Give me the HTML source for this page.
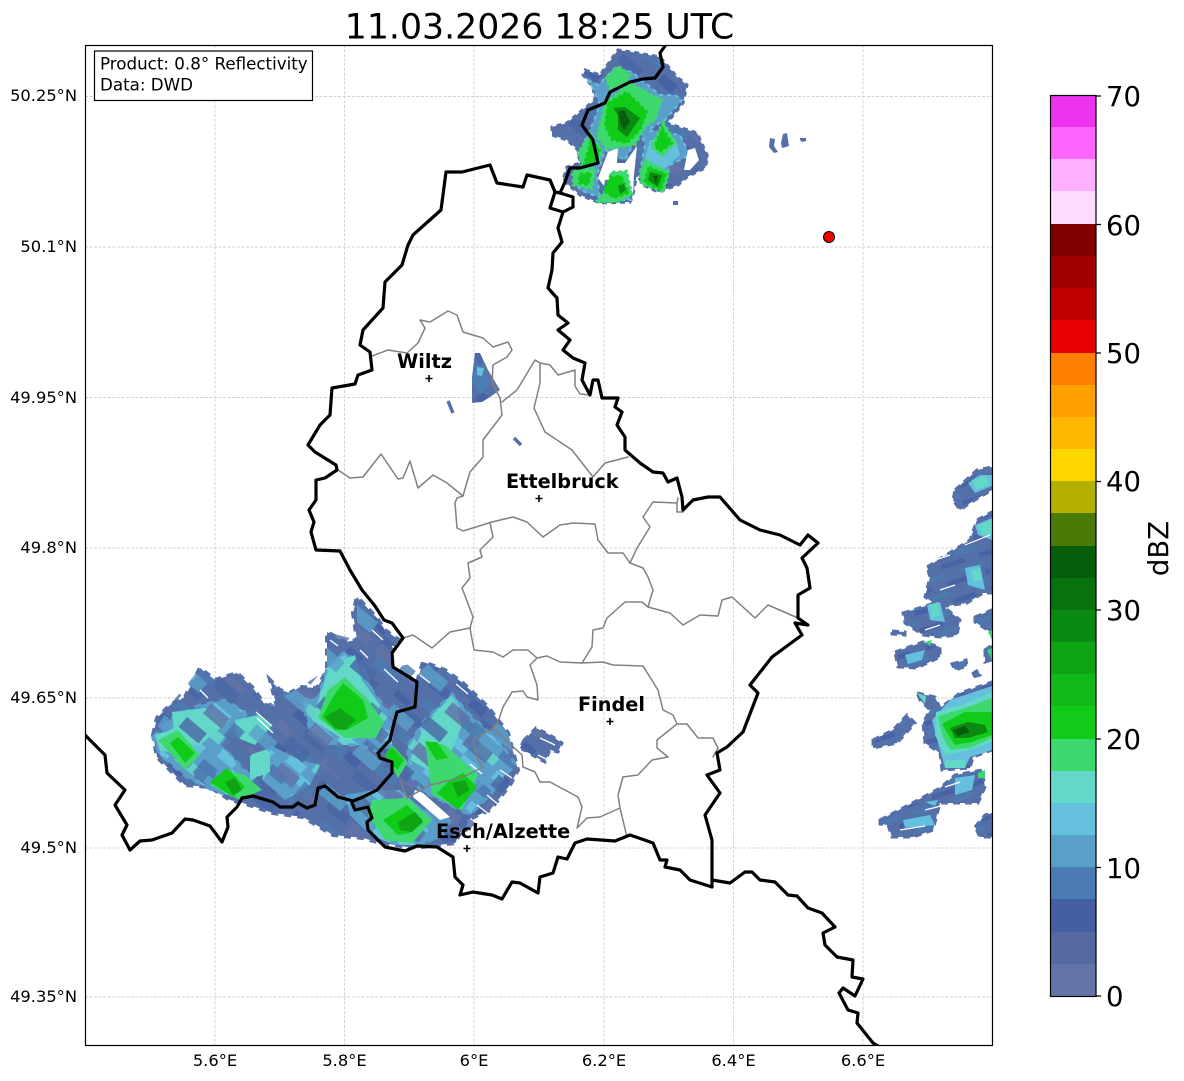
<!DOCTYPE html>
<html><head><meta charset="utf-8"><style>html,body{margin:0;padding:0;background:#fff}svg{display:block}text{font-family:"DejaVu Sans","Liberation Sans",sans-serif;fill:#000}</style></head><body>
<svg width="1184" height="1081" viewBox="0 0 1184 1081" xmlns="http://www.w3.org/2000/svg">
<defs>
<clipPath id="ax"><rect x="85.5" y="45.5" width="907" height="1000"/></clipPath>
<pattern id="pb" patternUnits="userSpaceOnUse" width="64" height="40" patternTransform="rotate(40)">
<rect width="64" height="40" fill="#5570a8"/><rect x="0" y="0" width="26" height="10" fill="#4a68a6"/><rect x="32" y="10" width="24" height="10" fill="#6072a8"/><rect x="8" y="20" width="30" height="10" fill="#4c79b0"/><rect x="44" y="30" width="18" height="10" fill="#4662a4"/></pattern>
<pattern id="pt" patternUnits="userSpaceOnUse" width="56" height="40" patternTransform="rotate(40)">
<rect width="56" height="40" fill="#5a9fc9"/><rect x="0" y="0" width="22" height="10" fill="#64c0dc"/><rect x="28" y="10" width="20" height="10" fill="#4d7db4"/><rect x="6" y="20" width="24" height="10" fill="#63d0cc"/><rect x="36" y="30" width="20" height="10" fill="#64c0dc"/></pattern>
<pattern id="po" patternUnits="userSpaceOnUse" width="92" height="52" patternTransform="rotate(40)">
<rect x="4" y="0" width="30" height="13" fill="#5570a8"/><rect x="52" y="13" width="26" height="13" fill="#4a68a6"/><rect x="18" y="26" width="28" height="13" fill="#5a9fc9"/><rect x="62" y="39" width="24" height="13" fill="#6072a8"/><rect x="0" y="39" width="14" height="13" fill="#4c79b0"/></pattern>
<pattern id="pe" patternUnits="userSpaceOnUse" width="40" height="18" patternTransform="rotate(-18)">
<rect width="40" height="18" fill="#5570a8"/><rect x="0" y="0" width="24" height="5" fill="#4862a6"/><rect x="16" y="9" width="24" height="5" fill="#4c79b0"/></pattern>
</defs>
<rect width="1184" height="1081" fill="#fff"/>
<text x="539.5" y="38.5" font-size="34.7" text-anchor="middle">11.03.2026 18:25 UTC</text>

<!-- grid -->
<g stroke="#c2c2c2" stroke-width=".7" stroke-dasharray="3 1.6" fill="none">
<path d="M215 45V1045M344.5 45V1045M474 45V1045M604 45V1045M733.5 45V1045M863 45V1045"/>
<path d="M85 96.5H992M85 247H992M85 397.5H992M85 548H992M85 698H992M85 848H992M85 997H992"/>
</g>

<g clip-path="url(#ax)">
<!-- SW cluster -->
<path fill="url(#pb)" stroke="#5570a8" stroke-width="4" stroke-dasharray="7 6" d="M153 735L157 718L170 705L185 697L200 668L215 680L237 673L253 688L265 705L277 707L270 680L280 690L290 693L300 687L317 688L327 670L327 632L345 642L357 640L353 613L357 597L377 618L385 630L399 640L390 653L391 667L417 682L423 662L445 670L463 683L488 707L508 733L518 770L510 785L490 810L467 820L455 843L423 847L407 847L377 842L363 838L333 835L303 817L273 813L243 803L230 800L210 787L185 785L157 757Z"/>
<path fill="url(#pb)" stroke="#5570a8" stroke-width="3" stroke-dasharray="6 5" d="M524 740L536 728L550 735L562 743L558 752L550 750L545 762L532 755L520 748Z"/>
<path fill="url(#pt)" stroke="#5a9fc9" stroke-width="3" stroke-dasharray="7 6" d="M153 737L172 718L200 705L225 700L245 712L248 725L225 745L235 760L250 775L262 785L245 797L228 795L212 790L188 778L160 755Z"/>
<path fill="url(#pt)" stroke="#5a9fc9" stroke-width="3" stroke-dasharray="7 6" d="M302 700L318 698L328 665L345 652L365 668L372 690L390 715L392 745L378 752L360 745L330 745L310 730Z"/>
<path fill="url(#pt)" stroke="#5a9fc9" stroke-width="3" stroke-dasharray="7 6" d="M408 745L425 720L452 694L470 715L490 733L500 742L516 765L505 775L490 795L470 815L450 805L420 790L408 770Z"/>
<path fill="url(#pt)" d="M345 795L375 790L400 790L430 815L445 835L425 845L395 845L370 835L350 815Z"/>
<path fill="url(#pt)" d="M270 745L300 760L320 765L310 785L285 800L262 780Z"/>
<path fill="#63d8c8" d="M172 712L205 708L230 720L200 745L175 745ZM235 720L258 715L272 725L255 745L238 738ZM155 735L175 728L180 755L160 750ZM250 755L270 748L270 772L250 780Z"/>
<path fill="#63d8c8" d="M330 665L355 655L362 680L380 705L375 735L345 740L312 720ZM425 725L452 695L462 725L450 755L428 770L410 760Z"/>
<path fill="url(#po)" opacity=".8" d="M153 735L170 705L200 668L237 673L265 705L290 693L327 670L327 632L357 640L357 597L385 630L393 667L423 662L463 683L508 733L518 770L490 810L455 843L407 847L363 838L303 817L243 803L210 787L157 757Z"/>
<path fill="#3dd86e" d="M328 690L345 677L368 700L384 722L376 738L345 738L318 718ZM210 785L225 770L245 775L262 790L240 800ZM158 740L178 730L200 755L185 770ZM425 740L445 745L478 775L462 810L432 795ZM385 755L392 745L408 762L398 778ZM372 800L408 798L432 820L412 843L385 840L368 815Z"/>
<path fill="#10cc18" d="M322 717L333 697L343 683L363 700L368 718L347 730L335 730ZM170 743L178 737L195 753L185 763ZM210 782L227 768L245 787L233 797ZM383 820L407 805L423 820L410 833L398 835ZM450 780L463 773L477 787L458 810L437 793ZM385 755L392 747L404 760L397 770ZM425 742L437 742L448 758L436 760Z"/>
<path fill="#0ea414" d="M325 717L340 708L356 720L345 730L335 728ZM225 782L235 778L242 790L233 795ZM398 822L415 812L423 822L412 832L400 830ZM452 783L465 780L470 790L458 797Z"/>
<path fill="#fff" d="M415 790L423 793L450 817L440 820L413 797Z"/>
<path stroke="#fff" stroke-width="1.3" d="M256 712L272 726M257 718L273 733M384 669L398 682M392 646L398 651M360 650L368 658M456 684L468 694M470 764L482 774M515 750L530 754M487 795L500 806M477 805L490 815M160 780L172 792M200 690L208 698M372 630L383 640M330 640L338 646M500 770L512 778M540 738L555 745M538 755L552 762M420 675L430 683"/>

<!-- north cluster -->
<path fill="url(#pb)" stroke="#5570a8" stroke-width="3" stroke-dasharray="5 4" d="M585 70L600 75L618 50L638 53L660 57L677 77L687 85L683 103L667 123L697 133L708 157L705 168L687 177L678 185L658 192L643 185L637 173L633 195L630 202L600 203L580 195L563 180L567 167L580 163L578 150L567 140L552 135L552 127L567 123L580 112L595 100L593 87L583 75Z"/>
<path fill="#5a9fc9" stroke="#64c0dc" stroke-width="2" stroke-dasharray="4 4" d="M588 80L598 85L615 68L632 72L660 95L675 95L682 100L665 120L648 130L680 135L690 155L670 165L665 180L650 182L640 172L645 145L640 130L625 160L605 150L597 175L600 197L625 197L630 200L605 200L580 190L572 175L585 165L585 140L592 125L600 105L595 92Z"/>
<path fill="#fff" d="M598 178L608 152L618 148L617 163L625 163L637 146L634 175L633 195L627 178L605 180L604 186ZM688 150L695 148L699 160L690 170L684 170Z"/>
<path fill="#64c0dc" d="M650 140L676 140L680 155L665 168L660 178L648 178L643 165Z"/>
<g stroke-dasharray="3 3" stroke-width="2.5">
<path fill="#3dd86e" stroke="#3dd86e" d="M606 78L618 66L630 75L624 88L610 90ZM605 103L630 83L662 100L655 120L645 127L635 145L607 149L597 137L600 123ZM663 122L676 143L662 156L651 147ZM645 160L669 172L664 192L641 184L640 172ZM590 133L602 150L599 162L583 170L578 153ZM573 170L595 168L592 189L573 185ZM596 202L608 187L611 172L627 171L632 195L618 202Z"/>
<path fill="#10cc18" stroke="#10cc18" d="M608 103L627 92L647 112L640 130L627 143L612 140L605 125ZM662 128L672 143L660 152L655 146ZM649 167L666 174L661 190L644 182ZM591 140L600 150L596 161L584 165ZM580 174L591 173L588 185L579 183ZM610 177L621 176L629 193L614 198L604 191Z"/>
</g>
<path fill="#0a8a12" d="M613 108L625 107L640 118L627 137L618 130L618 115ZM650 172L662 175L658 187L648 180ZM618 186L624 184L626 190L620 194Z"/>
<path fill="#065e0a" d="M618 112L624 110L630 122L624 130L620 122ZM653 176L658 176L656 184Z"/>
<path fill="#5570a8" d="M673 201h5v4h-5zM770 138l5 1-1 7 4 6-4 1-5-6zM783 134l4-1 2 13-7 2-1-5zM800 138h6v3l-4 1-2-2z"/>

<!-- Wiltz cell -->
<path fill="url(#pb)" d="M475 353L480 353L488 370L500 390L490 397L482 402L472 403L472 377Z"/>
<path fill="#4c7cb4" d="M476 365L484 365L490 385L480 395L475 385Z"/>
<path fill="#64c0dc" d="M477 367L484 368L482 376L477 375Z"/>
<path stroke="#5570a8" stroke-width="3.5" fill="none" d="M448 401L453 413M514 438L521 445"/>

<!-- east cluster -->
<g fill="url(#pe)" stroke="#5570a8" stroke-width="3" stroke-dasharray="7 5">
<path d="M955 490L977 470L992 467V490L970 503L960 510L953 500Z"/>
<path d="M927 567L970 540L977 520L992 512V593L983 593L967 603L940 607L925 597L930 577Z"/>
<path d="M903 613L938 602L960 620L957 635L940 637L923 635L905 623ZM892 631L905 632L905 635L892 634Z"/>
<path d="M895 652L923 642L940 647L940 657L917 668L898 667Z"/>
<path d="M952 664L966 660L967 666L955 670ZM972 674L978 670L980 675L973 677ZM975 617L992 610V633L975 622Z"/>
<path d="M917 693L935 697L940 708L960 693L992 682V750L973 757L970 768L942 770L940 753L925 743L923 723L930 710L920 700Z"/>
<path d="M873 740L893 730L907 715L915 723L897 743L873 748Z"/>
<path d="M880 820L903 808L940 788L955 775L982 770L985 787L978 803L960 803L940 803L933 830L913 837L892 837L888 825L880 824Z"/>
<path d="M975 827L985 815L992 813V837L980 837Z"/>
<path d="M985 650l7-5v15l-7 2z"/>
</g>
<g fill="#64c0dc">
<path d="M968 483L980 475L992 475V486L975 493ZM975 525L992 518V540L978 535ZM965 568L980 565L985 590L968 585ZM927 605L940 602L945 622L930 620ZM905 655L925 650L922 660L908 664ZM950 700L992 686V750L970 757L965 768L945 768L940 750L932 720Z"/>
<path d="M903 820L930 815L935 825L905 828ZM955 778L975 775L972 790L955 795ZM925 802L938 800L935 806Z"/>
</g>
<path fill="#63d8c8" d="M972 480L985 476L990 484L976 490ZM978 525L992 520V535L982 535ZM972 570L980 568L982 580L973 582ZM930 605L938 602L940 615L932 618ZM917 693L926 696L925 704ZM936 712L965 704L992 692V742L970 750L945 755L935 735ZM945 760L965 760L965 768L945 768Z"/>
<path fill="#3dd86e" d="M938 716L965 708L992 698V738L970 748L950 750L942 735ZM978 773L985 770V778L978 778ZM925 642L932 640L930 646ZM988 632L992 630V640ZM987 650L992 648V660Z"/>
<path fill="#10cc18" d="M942 724L965 712L992 712V735L972 742L955 745Z"/>
<path fill="#0a8a12" d="M950 728L968 722L985 725L988 732L968 738L955 738Z"/>
<path fill="#065e0a" d="M953 730L965 726L970 732L958 736Z"/>
<path stroke="#fff" stroke-width="1.2" d="M935 560L950 555M940 590L955 585M925 630L940 625M972 770L985 765M900 830L925 826M925 810L945 805M945 787L960 782M965 545L990 535"/>

<!-- grey boundaries -->
<g fill="none" stroke="#808080" stroke-width="1.5" stroke-linejoin="round" stroke-linecap="round">
<path d="M338 470L350 478L363 477L381 454L398 479L403 478L410 461L418 488L433 475L447 483L463 496L457 498L455 503L457 528L463 531L492 522L513 517L527 522L543 537L560 525L573 523L595 524L598 540L608 553L623 553L630 563L637 548L650 527L643 517L653 502L677 503L678 498M677 503V512L683 512"/>
<path d="M372 356L388 350L407 353L418 343L425 328L420 320L430 322L448 311L457 315L463 332L483 338L493 347L508 342L512 350L507 357L493 365L492 383L500 398L502 415L483 440L483 457L470 472L467 482L463 496"/>
<path d="M502 402L517 390L535 360L540 363L540 383L534 408L545 432L572 450L593 477L605 463L628 457M540 363L550 365L558 375L575 370L575 386L580 394L590 395"/>
<path d="M490 523L493 537L480 550L482 557L468 563L470 578L462 588L473 617L470 628L474 650L493 652L503 657L513 650L528 650L537 658L547 656L560 662L582 663L592 647L593 630L603 628L607 618L625 602L642 602L648 607L653 590L648 577L643 568L630 563"/>
<path d="M470 628L450 632L432 648L413 635L403 638"/>
<path d="M648 607L670 613L683 625L700 615L718 616L722 600L732 597L755 618L768 605L798 618"/>
<path d="M537 658L530 665L537 685L538 700L527 697L523 691L512 692L503 707L498 722L493 728L473 740L478 760L483 767L463 777L430 785L407 798L400 780M493 728L522 755L523 767L535 772L540 782L550 782L578 797L582 807L577 828L587 818L600 817L620 808L627 837M620 808L618 795L623 777L638 775L652 760L668 757L657 748L657 740L677 724M582 663L603 662L613 665L643 666L658 690L663 710L673 715L677 724L687 724L698 738L713 738L718 748L713 757"/>
</g>
<!-- black border -->
<g fill="none" stroke="#000" stroke-width="3.2" stroke-linejoin="round" stroke-linecap="round">
<path d="M665 46L660 53L663 67L655 78L643 79L630 82L610 92L605 103L588 110L582 125L593 140L598 163L580 168L570 168L565 182L560 193L573 197L573 207L563 212L558 228L562 242L553 253L552 270L548 288L557 298L558 315L568 323L558 330L570 340L563 350L573 358L585 363L582 380L590 395L593 380L598 380L602 398L618 398L615 407L622 412L617 425L625 437L625 450L640 463L653 472L663 473L668 482L677 478L682 497L683 510L693 500L708 497L720 497L740 520L760 530L780 535L800 545L808 535L818 543L802 558L807 568L810 588L798 595L798 618L808 625L795 623L802 635L772 657L750 685L758 693L743 732L727 747L717 753L720 770L707 775L720 793L705 815L712 840L712 887L690 880L680 870L665 867L667 860L660 860L653 843L630 835L615 841L587 839L575 843L567 859L558 857L553 873L540 877L538 893L520 883L512 882L502 899L492 895L473 892L460 895L463 885L455 877L453 857L437 847L417 846L405 851L385 847L368 830L367 822L372 818L368 807L355 810L352 803L353 801L338 797L325 786L318 788L315 805L307 808L298 803L293 807L280 807L273 802L253 796L242 798L237 807L227 817L228 827L222 842L210 826L193 820L185 819L172 833L152 840L140 841L130 850L122 835L127 825L115 805L125 790L107 773L105 755L85 735"/>
<path d="M560 193L555 192L550 180L527 175L523 187L497 183L490 165L462 172L446 172L441 210L413 235L408 245L402 265L385 282L383 308L363 330L360 345L370 352L372 370L358 375L355 384L332 388L330 415L320 425L308 445L315 452L336 465L337 470L325 478L316 480L316 500L309 510L314 522L311 532L316 550L340 551L350 570L362 590L375 606L384 620L392 623L403 638L392 653L393 667L417 682L415 707L397 712L393 727L390 740L378 753L380 758L392 762L392 773L377 790L363 797L353 801"/>
<path d="M550 180L555 192L550 208L563 212"/>
<path d="M712 880L730 883L745 872L752 872L760 880L775 882L788 895L797 896L808 908L822 913L835 927L823 933L825 945L837 957L853 960L852 977L863 979L855 996L843 988L839 993L848 1010L858 1013L857 1023L873 1043L878 1046"/>
</g>
<!-- cities -->
<g stroke="#000" stroke-width="1.6"><path d="M425.500 378.500h7M429 375v7M535.500 498.500h7M539 495v7M606.500 721.500h7M610 718v7M463.500 848.500h7M467 845v7"/></g>
<g font-size="19.300" font-weight="700">
<text x="397" y="368">Wiltz</text><text x="506" y="488">Ettelbruck</text><text x="578" y="711">Findel</text><text x="436" y="838">Esch/Alzette</text>
</g>
<circle cx="829" cy="237" r="5.500" fill="#f00000" stroke="#000" stroke-width="1"/>
</g>
<rect x="85.500" y="45.500" width="907" height="1000" fill="none" stroke="#000" stroke-width="1.200"/>

<!-- info box -->
<rect x="94.500" y="51" width="218" height="49.500" fill="#fff" stroke="#000" stroke-width="1.200"/>
<text x="100" y="69.500" font-size="16.700">Product: 0.8° Reflectivity</text>
<text x="100" y="90.500" font-size="16.700">Data: DWD</text>

<!-- tick labels -->
<g font-size="16.300" text-anchor="end">
<text x="77" y="101">50.25°N</text><text x="77" y="252">50.1°N</text><text x="77" y="403">49.95°N</text><text x="77" y="553">49.8°N</text><text x="77" y="703">49.65°N</text><text x="77" y="853">49.5°N</text><text x="77" y="1002">49.35°N</text>
</g>
<g font-size="16.300" text-anchor="middle">
<text x="215" y="1066">5.6°E</text><text x="344.500" y="1066">5.8°E</text><text x="474" y="1066">6°E</text><text x="604" y="1066">6.2°E</text><text x="733.500" y="1066">6.4°E</text><text x="863" y="1066">6.6°E</text>
</g>

<!-- colorbar -->
<g>
<rect x="1051" y="96" width="45" height="32" fill="#ee33ee"/><rect x="1051" y="127" width="45" height="33" fill="#ff66ff"/><rect x="1051" y="159" width="45" height="33" fill="#ffb0ff"/><rect x="1051" y="191" width="45" height="33" fill="#ffdcff"/>
<rect x="1051" y="224" width="45" height="32" fill="#800000"/><rect x="1051" y="256" width="45" height="32" fill="#a00000"/><rect x="1051" y="288" width="45" height="32" fill="#c00000"/><rect x="1051" y="320" width="45" height="33" fill="#e60000"/>
<rect x="1051" y="353" width="45" height="32" fill="#ff8000"/><rect x="1051" y="385" width="45" height="32" fill="#ff9f00"/><rect x="1051" y="417" width="45" height="32" fill="#ffb800"/><rect x="1051" y="449" width="45" height="32" fill="#ffd700"/>
<rect x="1051" y="481" width="45" height="32" fill="#b4b000"/><rect x="1051" y="513" width="45" height="33" fill="#4a7a08"/><rect x="1051" y="546" width="45" height="32" fill="#065e0a"/><rect x="1051" y="578" width="45" height="32" fill="#08720e"/>
<rect x="1051" y="610" width="45" height="32" fill="#0a8a12"/><rect x="1051" y="642" width="45" height="32" fill="#0ea414"/><rect x="1051" y="674" width="45" height="32" fill="#10b818"/><rect x="1051" y="706" width="45" height="33" fill="#10cc18"/>
<rect x="1051" y="739" width="45" height="32" fill="#3dd86e"/><rect x="1051" y="771" width="45" height="32" fill="#63d8c8"/><rect x="1051" y="803" width="45" height="32" fill="#64c0dc"/><rect x="1051" y="835" width="45" height="32" fill="#5a9fc9"/>
<rect x="1051" y="867" width="45" height="32" fill="#4a7bb3"/><rect x="1051" y="899" width="45" height="33" fill="#4460a2"/><rect x="1051" y="932" width="45" height="32" fill="#54699f"/><rect x="1051" y="964" width="45" height="32" fill="#6274a8"/>
<rect x="1050.500" y="95.500" width="45.500" height="901" fill="none" stroke="#000" stroke-width="1.200"/>
<path stroke="#000" stroke-width="1.200" d="M1096 96h5M1096 224.500h5M1096 353h5M1096 481.500h5M1096 610h5M1096 739h5M1096 867.500h5M1096 996h5"/>
</g>
<g font-size="27.500">
<text x="1106" y="106">70</text><text x="1106" y="235">60</text><text x="1106" y="363">50</text><text x="1106" y="491">40</text><text x="1106" y="620">30</text><text x="1106" y="749">20</text><text x="1106" y="878">10</text><text x="1106" y="1006">0</text>
</g>
<text transform="translate(1168 548.500) rotate(-90)" font-size="27.500" text-anchor="middle">dBZ</text>
</svg>
</body></html>
